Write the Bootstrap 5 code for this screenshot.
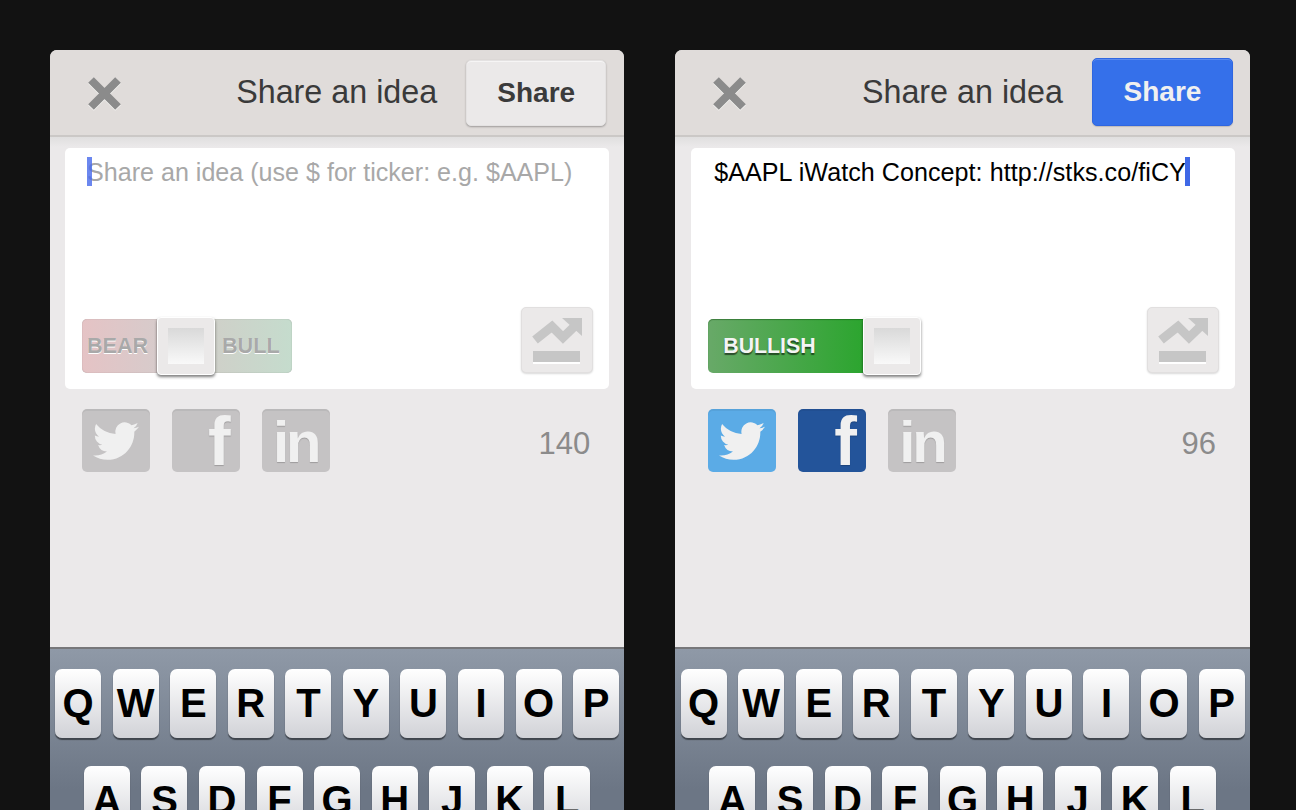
<!DOCTYPE html>
<html lang="en"><head><meta charset="utf-8"><title>Share an idea</title>
<link href="https://cdn.jsdelivr.net/npm/bootstrap@5.3.0/dist/css/bootstrap.min.css" rel="stylesheet">
<style>
html,body{height:810px;overflow:hidden;background:#121212;font-family:"Liberation Sans",Arial,sans-serif}
.stage{gap:51px;padding:50px 46px 0 50px;height:810px}
.phone{width:574.5px;height:760px;overflow:hidden;border-radius:7px 7px 0 0;background:#ebe9ea}
.phone+.phone{width:575px}
.topbar{height:87px;background:#e0dcda;border-bottom:2px solid #cbc8c6;padding-right:18px;flex:none}
.phone+.phone .topbar{padding-right:17px}
.closer{width:38px;height:38px;margin-left:35px;flex:none}
.heading{font-size:32.3px;color:#3a3a3a;margin-right:29px;line-height:1}
.sharebtn{width:140px;height:66px;font-size:28px;font-weight:700;border-radius:5px;padding:0;color:#3b3b3b;background:#ebe9e9;border:1px solid #e4e2e2;box-shadow:0 1px 2px rgba(0,0,0,.3),inset 0 1px 0 #f6f5f5}
.sharebtn:hover,.sharebtn.on{color:#f0f0f0;background:#3570ea;border-color:#2f66e0}
.sharebtn.on{width:141px;height:68px;margin-top:-2px;box-shadow:inset 0 1px 0 #5a8af0,0 1px 1px rgba(0,0,0,.15)}
.pane{background:linear-gradient(#e0dfdf,#ebe9ea 10px);height:510px;padding:11px 15px 0;flex:none}
.phone+.phone .pane{padding-left:16px}
.composer{height:241px;background:#fff;border-radius:5px;padding:9px 16px 16px 22px}
.typed{font-size:25.1px;line-height:31px;color:#000;height:29px;white-space:nowrap;margin-left:1px;letter-spacing:.05px}
.typed.hint{color:#a8a8a8;margin-left:0;letter-spacing:0}
.caret{display:inline-block;width:5px;height:29px;background:#3f68e6;vertical-align:top;margin-left:-1px}
.hint .caret{margin:0 -5px 0 0;background:rgba(70,105,235,.8);position:relative}
.toolrow{margin-left:-5px}
.toggle{height:54px}
.seg{height:54px;font-weight:700;font-size:21.6px;line-height:54px;color:#a9a9a9;text-shadow:0 1px 0 #fff;box-shadow:inset 0 0 1px rgba(0,0,0,.35)}
.seg.bear{width:75px;padding-left:5px;border-radius:5px 0 0 5px;background:linear-gradient(90deg,#e5c3c5,#d7cbcb);white-space:nowrap}
.seg.bull{width:79px;padding-left:9px;border-radius:0 5px 5px 0;background:linear-gradient(90deg,#cfd0c9,#c5dccd);margin-left:-1px}
.seg.bullish{width:155px;padding-left:15px;border-radius:5px 0 0 5px;color:#f4f4f4;font-size:21.3px;text-shadow:0 2px 1px rgba(0,0,0,.55);background:linear-gradient(90deg,#68a968,#2ca52f);box-shadow:inset 0 1px 1px rgba(0,60,0,.4)}
.thumb{width:58px;height:58px;margin:-2px -1px -2px 0;background:#ebe9e9;border:1px solid #fff;border-radius:4px;box-shadow:0 2px 3px rgba(0,0,0,.5);position:relative;flex:none}
.thumbcore{width:36px;height:36px;background:linear-gradient(#d9d9d9,#f9f9f9)}
.chartbtn{width:72px;height:66px;background:#ebe9e9;border:1px solid #e1dfdf;border-radius:5px;box-shadow:0 1px 2px rgba(0,0,0,.15)}
.social{padding:20px 19px 0 17px;height:83px}
.glyphbox{width:68px;height:63px;border-radius:5px;background:#c5c3c4;box-shadow:inset 0 2px 0 rgba(0,0,0,.05);color:#f0f0f0;margin-right:22px;flex:none}
.glyphbox.tw{background:#5babe6}
.glyphbox.fb{background:#23549a}
.glyphbox svg{width:46px;height:46px}
.lf{font-weight:700;font-size:68px;line-height:63px;padding-left:36px;margin-top:1px;height:62px;text-shadow:0 1px 1px rgba(0,0,0,.2)}
.lin{font-weight:700;font-size:58px;line-height:63px;letter-spacing:-3px;padding-left:11px;margin-top:1px;height:62px;text-shadow:0 1px 1px rgba(0,0,0,.2)}
.counter{font-size:31px;color:#8b8b8b;margin-top:12px}
.keyboard{flex:1;border-top:2px solid #77777a;background:linear-gradient(#8f99a7,#6c7685 140px);padding-top:20px}
.keyrow{gap:11.55px;margin-bottom:28px}
.keycap{width:46px;height:69px;flex:none;border-radius:7px;background:linear-gradient(#fff,#d1d2d7);box-shadow:0 2px 1px #3f444c;font-weight:700;font-size:40px;color:#000;text-align:center;line-height:69px}
</style></head>
<body>
<div class="stage d-flex align-items-start">

<section class="phone d-flex flex-column">
  <div class="topbar d-flex align-items-center">
    <svg class="closer" viewBox="0 0 38 38"><path d="M6 7L33 34M33 7L6 34" stroke="#fff" stroke-width="8" opacity=".7"/><path d="M6 6L33 33M33 6L6 33" stroke="#8b8b8b" stroke-width="8"/></svg>
    <div class="heading ms-auto">Share an idea</div>
    <button class="btn sharebtn" type="button">Share</button>
  </div>
  <div class="pane">
    <div class="composer d-flex flex-column">
      <div class="typed hint"><span class="caret"></span>Share an idea (use $ for ticker: e.g. $AAPL)</div>
      <div class="toolrow d-flex justify-content-between align-items-end mt-auto">
        <div class="toggle d-flex align-items-center">
          <div class="seg bear">BEAR</div>
          <div class="thumb d-flex align-items-center justify-content-center"><div class="thumbcore"></div></div>
          <div class="seg bull">BULL</div>
        </div>
        <div class="chartbtn d-flex align-items-center justify-content-center">
          <svg width="60" height="56" viewBox="0 0 60 56"><path d="M8 28L25 14.5L36 25.5L50 12" fill="none" stroke="#c6c6c6" stroke-width="9"/><path d="M35 6H55V24Z" fill="#c6c6c6"/><rect x="6" y="39" width="47" height="11" fill="#c6c6c6"/><rect x="6" y="50" width="47" height="2" fill="#fff"/></svg>
        </div>
      </div>
    </div>
    <div class="social d-flex align-items-start">
      <div class="glyphbox d-flex align-items-center justify-content-center"><svg viewBox="0 0 24 24" fill="currentColor"><path d="M23.953 4.57a10 10 0 01-2.825.775 4.958 4.958 0 002.163-2.723c-.951.555-2.005.959-3.127 1.184a4.92 4.92 0 00-8.384 4.482C7.69 8.095 4.067 6.13 1.64 3.162a4.822 4.822 0 00-.666 2.475c0 1.71.87 3.213 2.188 4.096a4.904 4.904 0 01-2.228-.616v.06a4.923 4.923 0 003.946 4.827 4.996 4.996 0 01-2.212.085 4.936 4.936 0 004.604 3.417 9.867 9.867 0 01-6.102 2.105c-.39 0-.779-.023-1.17-.067a13.995 13.995 0 007.557 2.209c9.053 0 13.998-7.496 13.998-13.985 0-.21 0-.42-.015-.63A9.935 9.935 0 0024 4.59z"/></svg></div>
      <div class="glyphbox"><div class="lf">f</div></div>
      <div class="glyphbox"><div class="lin">in</div></div>
      <div class="counter ms-auto">140</div>
    </div>
  </div>
  <div class="keyboard">
    <div class="keyrow d-flex justify-content-center"><div class="keycap">Q</div><div class="keycap">W</div><div class="keycap">E</div><div class="keycap">R</div><div class="keycap">T</div><div class="keycap">Y</div><div class="keycap">U</div><div class="keycap">I</div><div class="keycap">O</div><div class="keycap">P</div></div>
    <div class="keyrow d-flex justify-content-center"><div class="keycap">A</div><div class="keycap">S</div><div class="keycap">D</div><div class="keycap">F</div><div class="keycap">G</div><div class="keycap">H</div><div class="keycap">J</div><div class="keycap">K</div><div class="keycap">L</div></div>
  </div>
</section>

<section class="phone d-flex flex-column">
  <div class="topbar d-flex align-items-center">
    <svg class="closer" viewBox="0 0 38 38"><path d="M6 7L33 34M33 7L6 34" stroke="#fff" stroke-width="8" opacity=".7"/><path d="M6 6L33 33M33 6L6 33" stroke="#8b8b8b" stroke-width="8"/></svg>
    <div class="heading ms-auto">Share an idea</div>
    <button class="btn sharebtn on" type="button">Share</button>
  </div>
  <div class="pane">
    <div class="composer d-flex flex-column">
      <div class="typed">$AAPL iWatch Concept: http://stks.co/fiCY<span class="caret"></span></div>
      <div class="toolrow d-flex justify-content-between align-items-end mt-auto">
        <div class="toggle d-flex align-items-center">
          <div class="seg bullish">BULLISH</div>
          <div class="thumb d-flex align-items-center justify-content-center"><div class="thumbcore"></div></div>
        </div>
        <div class="chartbtn d-flex align-items-center justify-content-center">
          <svg width="60" height="56" viewBox="0 0 60 56"><path d="M8 28L25 14.5L36 25.5L50 12" fill="none" stroke="#c6c6c6" stroke-width="9"/><path d="M35 6H55V24Z" fill="#c6c6c6"/><rect x="6" y="39" width="47" height="11" fill="#c6c6c6"/><rect x="6" y="50" width="47" height="2" fill="#fff"/></svg>
        </div>
      </div>
    </div>
    <div class="social d-flex align-items-start">
      <div class="glyphbox tw d-flex align-items-center justify-content-center"><svg viewBox="0 0 24 24" fill="currentColor"><path d="M23.953 4.57a10 10 0 01-2.825.775 4.958 4.958 0 002.163-2.723c-.951.555-2.005.959-3.127 1.184a4.92 4.92 0 00-8.384 4.482C7.69 8.095 4.067 6.13 1.64 3.162a4.822 4.822 0 00-.666 2.475c0 1.71.87 3.213 2.188 4.096a4.904 4.904 0 01-2.228-.616v.06a4.923 4.923 0 003.946 4.827 4.996 4.996 0 01-2.212.085 4.936 4.936 0 004.604 3.417 9.867 9.867 0 01-6.102 2.105c-.39 0-.779-.023-1.17-.067a13.995 13.995 0 007.557 2.209c9.053 0 13.998-7.496 13.998-13.985 0-.21 0-.42-.015-.63A9.935 9.935 0 0024 4.59z"/></svg></div>
      <div class="glyphbox fb"><div class="lf">f</div></div>
      <div class="glyphbox"><div class="lin">in</div></div>
      <div class="counter ms-auto">96</div>
    </div>
  </div>
  <div class="keyboard">
    <div class="keyrow d-flex justify-content-center"><div class="keycap">Q</div><div class="keycap">W</div><div class="keycap">E</div><div class="keycap">R</div><div class="keycap">T</div><div class="keycap">Y</div><div class="keycap">U</div><div class="keycap">I</div><div class="keycap">O</div><div class="keycap">P</div></div>
    <div class="keyrow d-flex justify-content-center"><div class="keycap">A</div><div class="keycap">S</div><div class="keycap">D</div><div class="keycap">F</div><div class="keycap">G</div><div class="keycap">H</div><div class="keycap">J</div><div class="keycap">K</div><div class="keycap">L</div></div>
  </div>
</section>

</div>
<script src="https://cdn.jsdelivr.net/npm/bootstrap@5.3.0/dist/js/bootstrap.bundle.min.js"></script>
</body></html>
